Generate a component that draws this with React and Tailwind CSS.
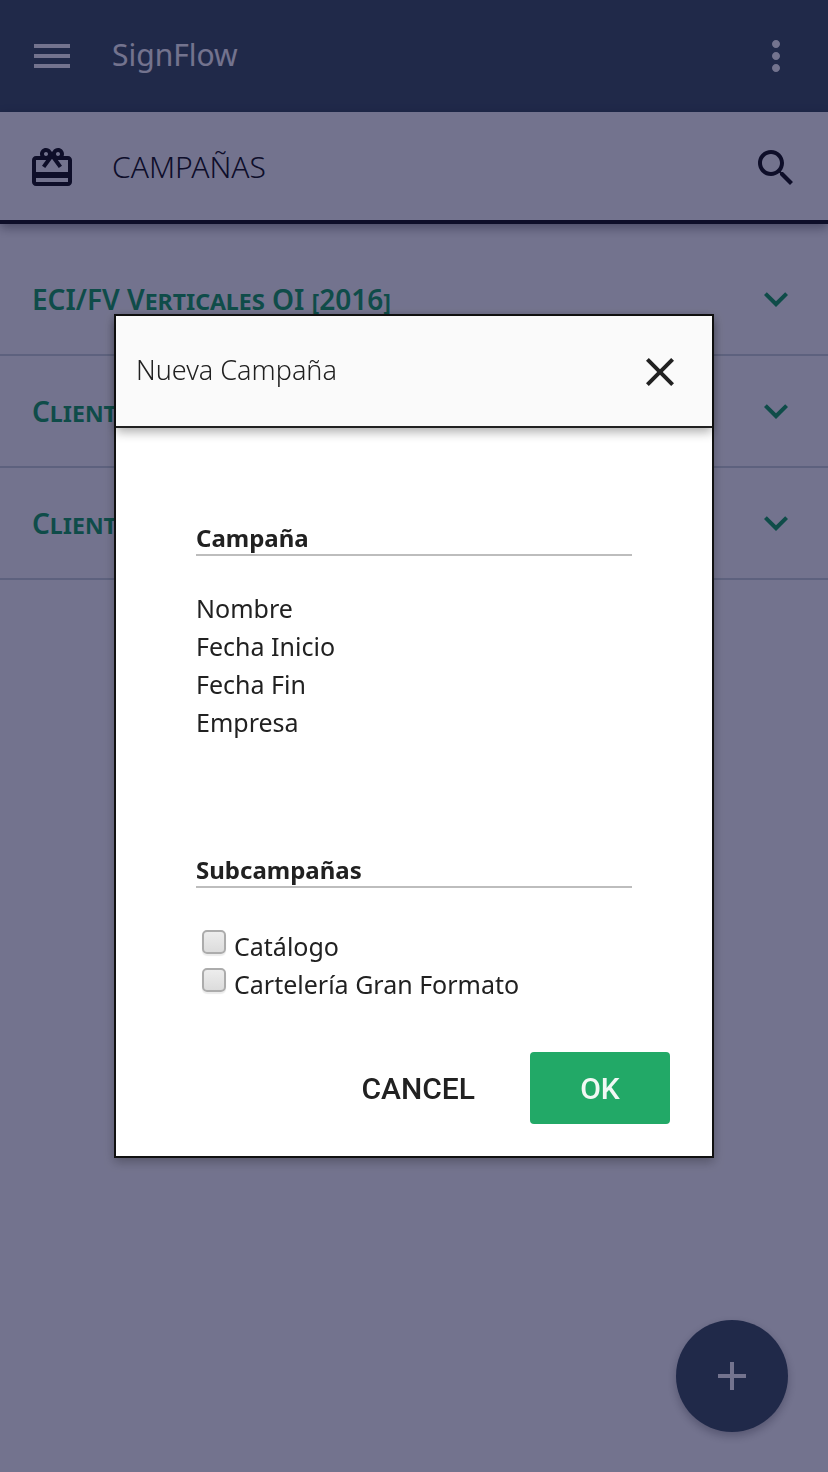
import React from "react";

const ICONS = {
  menu: "M3 18h18v-2H3v2zm0-5h18v-2H3v2zm0-7v2h18V6H3z",
  more: "M12 8c1.1 0 2-.9 2-2s-.9-2-2-2-2 .9-2 2 .9 2 2 2zm0 2c-1.1 0-2 .9-2 2s.9 2 2 2 2-.9 2-2-.9-2-2-2zm0 6c-1.1 0-2 .9-2 2s.9 2 2 2 2-.9 2-2-.9-2-2-2z",
  gift: "M20 6h-2.18c.11-.31.18-.65.18-1 0-1.66-1.34-3-3-3-1.05 0-1.96.54-2.5 1.35l-.5.67-.5-.68C10.96 2.54 10.05 2 9 2 7.34 2 6 3.34 6 5c0 .35.07.69.18 1H4c-1.11 0-1.99.89-1.99 2L2 19c0 1.11.89 2 2 2h16c1.11 0 2-.89 2-2V8c0-1.11-.89-2-2-2zm-5-2c.55 0 1 .45 1 1s-.45 1-1 1-1-.45-1-1 .45-1 1-1zM9 4c.55 0 1 .45 1 1s-.45 1-1 1-1-.45-1-1 .45-1 1-1zm11 15H4v-2h16v2zm0-5H4V8h5.08L7 10.83 8.62 12 11 8.76l1-1.36 1 1.36L15.38 12 17 10.83 14.92 8H20v6z",
  search: "M15.5 14h-.79l-.28-.27C15.41 12.59 16 11.11 16 9.5 16 5.91 13.09 3 9.5 3S3 5.91 3 9.5 5.91 16 9.5 16c1.61 0 3.09-.59 4.23-1.57l.27.28v.79l5 4.99L20.49 19l-4.99-5zm-6 0C7.01 14 5 11.99 5 9.5S7.01 5 9.5 5 14 7.01 14 9.5 11.99 14 9.5 14z",
  expand: "M16.59 8.59L12 13.17 7.41 8.59 6 10l6 6 6-6z",
  close: "M19 6.41L17.59 5 12 10.59 6.41 5 5 6.41 10.59 12 5 17.59 6.41 19 12 13.41 17.59 19 19 17.59 13.41 12z",
  add: "M19 13h-6v6h-2v-6H5v-2h6V5h2v6h6v2z",
};

function Icon({ name }) {
  return (
    <svg viewBox="0 0 24 24" className="size-12 shrink-0 fill-current" aria-hidden="true">
      <path d={ICONS[name]} />
    </svg>
  );
}

const campaigns = ["ECI/FV Verticales OI [2016]", "Cliente 2", "Cliente 3"];
const fields = ["Nombre", "Fecha Inicio", "Fecha Fin", "Empresa"];
const subcampaigns = ["Catálogo", "Cartelería Gran Formato"];

function SectionTitle({ children }) {
  return (
    <h3 className="h-8 border-b-2 border-[#bdbdbd] text-[24px] leading-[28px] font-bold">{children}</h3>
  );
}

function Dialog() {
  return (
    <div
      role="dialog"
      aria-modal="true"
      aria-labelledby="dialog-title"
      className="w-full max-w-[600px] border-2 border-[#111] bg-white shadow-[0_4px_10px_rgba(0,0,0,0.26)]"
    >
      <header className="flex h-28 items-start justify-between border-b-2 border-[#212121] bg-[#fafafa] pt-8 pr-7 pl-5 shadow-[0_4px_10px_rgba(0,0,0,0.32)]">
        <h2 id="dialog-title" className="text-[27px] leading-[44px] font-light">Nueva Campaña</h2>
        <button type="button" aria-label="Cerrar">
          <Icon name="close" />
        </button>
      </header>
      <form className="pt-24 pb-8">
        <section className="px-20">
          <SectionTitle>Campaña</SectionTitle>
          <ul className="mt-[33px] text-[25px] leading-[38px]">
            {fields.map((f) => (
              <li key={f}>{f}</li>
            ))}
          </ul>
        </section>
        <section className="mt-[115px] px-20">
          <SectionTitle>Subcampañas</SectionTitle>
          <div className="mt-[39px] text-[25px] leading-[38px]">
            {subcampaigns.map((s) => (
              <label key={s} className="flex items-start gap-2 pl-1.5">
                <input
                  type="checkbox"
                  className="mt-[3px] size-6 shrink-0 appearance-none rounded-[5px] border-2 border-[#acacac] bg-linear-to-b from-[#ededed] to-[#dcdcdc] shadow-[0_2px_1px_rgba(0,0,0,0.08)]"
                />
                {s}
              </label>
            ))}
          </div>
        </section>
        <div className="mt-[49px] flex justify-end gap-3 pr-[42px] font-['Roboto',sans-serif] text-[30px] font-medium">
          <button type="button" className="h-[72px] px-[43px]">CANCEL</button>
          <button type="submit" className="h-[72px] w-[140px] rounded-sm bg-[#22a967] text-[#f1f8f4]">OK</button>
        </div>
      </form>
    </div>
  );
}

export default function App() {
  return (
    <div className="min-h-screen bg-white font-['Noto_Sans','Open_Sans',sans-serif] text-[#212121]">
      <header className="flex h-28 items-start bg-[#475b67] px-7 pt-8 text-white">
        <button type="button" aria-label="Menú">
          <Icon name="menu" />
        </button>
        <h1 className="ml-9 flex-1 text-[30px] leading-[46px]">SignFlow</h1>
        <button type="button" aria-label="Más opciones">
          <Icon name="more" />
        </button>
      </header>
      <div className="flex h-28 items-start border-b-4 px-7 pt-8 shadow-[0_4px_10px_rgba(0,0,0,0.35)]">
        <Icon name="gift" />
        <h2 className="ml-9 flex-1 text-[30px] leading-[46px] font-light">CAMPAÑAS</h2>
        <button type="button" aria-label="Buscar">
          <Icon name="search" />
        </button>
      </div>
      <ul className="pt-5 text-[#22a967]">
        {campaigns.map((c) => (
          <li key={c} className="border-b-2 border-[#cfd8dc]">
            <button type="button" className="flex h-[110px] w-full items-center justify-between pr-7 pl-8">
              <span className="text-[28px] font-semibold [font-variant-caps:small-caps]">{c}</span>
              <Icon name="expand" />
            </button>
          </li>
        ))}
      </ul>
      <button
        type="button"
        aria-label="Añadir campaña"
        className="fixed right-10 bottom-10 flex size-28 items-center justify-center rounded-full bg-[#475b67] text-white shadow-[0_4px_10px_rgba(0,0,0,0.26)]"
      >
        <Icon name="add" />
      </button>
      <div className="fixed inset-0 flex items-center justify-center bg-[#000032]/55">
        <Dialog />
      </div>
    </div>
  );
}
